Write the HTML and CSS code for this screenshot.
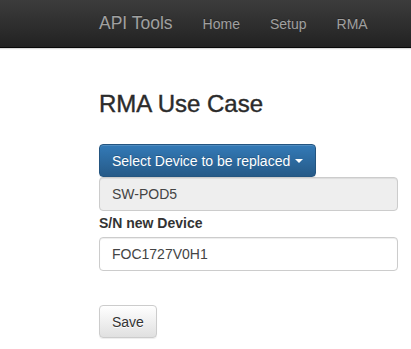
FILE: index.html
```html
<!DOCTYPE html>
<html lang="en">

<head>
    <meta charset="UTF-8">
    <meta name="viewport" content="width=device-width, initial-scale=1.0">
    <title>API Tools - RMA</title>
    <link rel="stylesheet" href="styles.css">
</head>

<body>
    <nav class="navbar">
        <div class="navbar-inner">
            <a class="navbar-brand" href="#">API Tools</a>
            <ul class="nav">
                <li><a href="#">Home</a></li>
                <li><a href="#">Setup</a></li>
                <li><a href="#">RMA</a></li>
            </ul>
        </div>
    </nav>

    <div class="container">
        <h2 class="page-title">RMA Use Case</h2>

        <form class="rma-form">
            <button type="button" class="btn btn-primary">
                Select Device to be replaced <span class="caret"></span>
            </button>
            <input class="form-control" type="text" value="SW-POD5" readonly>

            <label class="form-label" for="sn">S/N new Device</label>
            <input class="form-control" id="sn" type="text" value="FOC1727V0H1">

            <button type="button" class="btn btn-default">Save</button>
        </form>
    </div>
</body>

</html>
```

FILE: styles.css
```css
* {
    margin: 0;
    padding: 0;
    box-sizing: border-box;
}

body,
html {
    height: 100%;
    overflow: hidden;
    background: #fff;
    color: #333;
    font-family: 'Liberation Sans', Arial, sans-serif;
    font-size: 14px;
}

/* top bar */
.navbar {
    height: 48px;
    background: linear-gradient(to bottom, #3c3c3c 0%, #222 100%);
    border-bottom: 1px solid #080808;
    box-shadow: 0 1px 1px rgba(0, 0, 0, 0.15);
}

.navbar-inner {
    height: 100%;
    display: flex;
    align-items: center;
    padding-left: 84px;
}

.navbar-brand {
    padding: 0 15px;
    font-size: 17.5px;
    color: #a0a0a0;
    text-decoration: none;
    text-shadow: 0 -1px 0 rgba(0, 0, 0, 0.25);
}

.nav {
    display: flex;
    list-style: none;
}

.nav a {
    display: block;
    padding: 0 15px;
    color: #a0a0a0;
    text-decoration: none;
    text-shadow: 0 -1px 0 rgba(0, 0, 0, 0.25);
}

/* content */
.container {
    padding-left: 99px;
}

.page-title {
    margin-top: 43px;
    margin-bottom: 27px;
    font-size: 24px;
    font-weight: 500;
    line-height: 26px;
    color: #2b2b2b;
    -webkit-text-stroke: 0.4px #2b2b2b;
}

.rma-form {
    width: 299px;
    display: flex;
    flex-direction: column;
    align-items: flex-start;
}

.btn {
    display: inline-flex;
    align-items: center;
    height: 33px;
    padding: 0 12px;
    font-family: inherit;
    font-size: 14px;
    border: 1px solid transparent;
    border-radius: 4px;
    box-shadow: inset 0 1px 0 rgba(255, 255, 255, 0.15), 0 1px 1px rgba(0, 0, 0, 0.075);
    cursor: pointer;
}

.btn-primary {
    color: #fff;
    background: linear-gradient(to bottom, #337ab7 0%, #265a88 100%);
    border-color: #245580;
    text-shadow: 0 -1px 0 rgba(0, 0, 0, 0.2);
}

.btn-default {
    margin-top: 34px;
    color: #333;
    background: linear-gradient(to bottom, #fff 0%, #e0e0e0 100%);
    border-color: #ccc;
    text-shadow: 0 1px 0 #fff;
}

.caret {
    display: inline-block;
    width: 0;
    height: 0;
    margin-left: 5px;
    margin-top: 1px;
    border-top: 4px solid #fff;
    border-left: 4px solid transparent;
    border-right: 4px solid transparent;
}

.form-control {
    width: 100%;
    height: 34px;
    padding: 0 12px;
    font-family: inherit;
    font-size: 14px;
    color: #444;
    background: #fff;
    border: 1px solid #ccc;
    border-radius: 4px;
    box-shadow: inset 0 1px 1px rgba(0, 0, 0, 0.075);
}

.form-control[readonly] {
    background: #eee;
}

.form-label {
    margin-top: 2px;
    margin-bottom: 4px;
    font-weight: 700;
    line-height: 20px;
}
```
